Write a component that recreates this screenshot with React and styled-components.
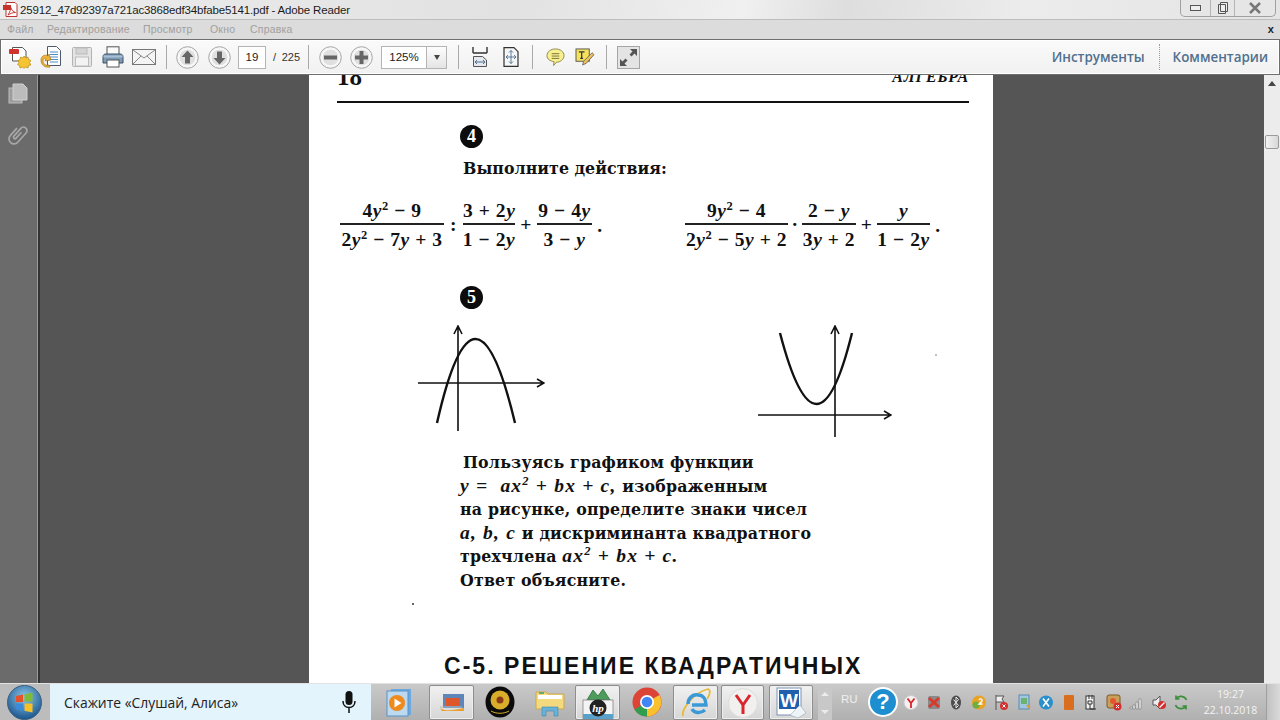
import React from "react";
import styled, { createGlobalStyle } from "styled-components";

const Global = createGlobalStyle`
  html, body { margin: 0; padding: 0; width: 1280px; height: 720px; overflow: hidden; background: #555; }
  * { box-sizing: border-box; }
`;

const Shell = styled.div`
  width: 1280px;
  height: 720px;
  display: flex;
  flex-direction: column;
  font-family: "Liberation Sans", Arial, sans-serif;
  overflow: hidden;
`;

/* window chrome */
const TitleBar = styled.div`
  height: 20px;
  flex: none;
  display: flex;
  align-items: flex-start;
  padding: 2px 4px 0 3px;
  background: linear-gradient(100deg, #ececec 0%, #e2e2e2 40%, #f0f0f0 58%, #dedede 66%, #ececec 80%, #e4e4e4 100%);
  border-bottom: 1px solid #bdbdbd;
`;
const TitleText = styled.span`
  margin-left: 2px;
  font-size: 11.5px;
  line-height: 16px;
  color: #1c1c1c;
  letter-spacing: -0.16px;
`;
const WinButtons = styled.div`
  margin: -2px 0 0 auto;
  width: 96px;
  height: 17px;
  display: flex;
  border: 1px solid #a0a0a0;
  border-top: 0;
  border-radius: 0 0 5px 5px;
  background: #e6e6e6;
`;
const WinBtn = styled.div`
  width: ${p => p.$w}px;
  display: flex;
  align-items: center;
  justify-content: center;
  border-right: ${p => (p.$last ? "0" : "1px solid #b5b5b5")};
`;
const MenuBar = styled.div`
  height: 19px;
  flex: none;
  display: flex;
  align-items: center;
  padding: 0 6px 1px 7px;
  background: #dcdcdc;
  font-size: 10.5px;
  color: #a0a0a0;
  letter-spacing: 0.2px;
`;
const MenuItem = styled.span`
  width: ${p => p.$w}px;
`;
const MenuClose = styled.span`
  margin-left: auto;
  font-size: 11px;
  font-weight: 700;
  color: #222;
`;
const Toolbar = styled.div`
  height: 36px;
  flex: none;
  display: flex;
  align-items: center;
  padding-left: 3px;
  padding-right: 11px;
  background: linear-gradient(#fafafa, #f1f1f1);
  border: 1px solid #6e6e6e;
  box-shadow: inset 0 0 0 1px #fff;
`;
const Tool = styled.div`
  width: ${p => p.$w || 30}px;
  margin-left: ${p => p.$ml || 0}px;
  height: 30px;
  flex: none;
  display: flex;
  align-items: center;
  justify-content: center;
`;
const Sep = styled.div`
  width: 1px;
  height: 24px;
  flex: none;
  margin: 0 6px 0 ${p => p.$ml || 6}px;
  background: #a9a9a9;
`;
const PageInput = styled.div`
  width: 28px;
  height: 23px;
  margin-left: 5px;
  flex: none;
  display: flex;
  align-items: center;
  justify-content: center;
  background: #fff;
  border: 1px solid #b4b4b4;
  font-size: 11.5px;
  color: #222;
`;
const PageCount = styled.div`
  width: 27px;
  display: flex;
  justify-content: space-between;
  flex: none;
  margin-left: 7px;
  font-size: 11px;
  color: #333;
`;
const ZoomBox = styled.div`
  width: 66px;
  height: 23px;
  margin-left: 5px;
  flex: none;
  display: flex;
  background: #fff;
  border: 1px solid #b4b4b4;
  font-size: 11.5px;
  color: #222;
`;
const ZoomValue = styled.div`
  flex: 1;
  display: flex;
  align-items: center;
  justify-content: center;
`;
const ZoomArrow = styled.div`
  width: 20px;
  display: flex;
  align-items: center;
  justify-content: center;
  border-left: 1px solid #b4b4b4;
  background: linear-gradient(#fdfdfd, #e4e4e4);
  &::after {
    content: "";
    border: 3.5px solid transparent;
    border-top: 5px solid #444;
    border-bottom: 0;
  }
`;
const PaneLinks = styled.div`
  margin-left: auto;
  display: flex;
  align-items: center;
  font-family: "Open Sans", "Liberation Sans", sans-serif;
  font-size: 13.4px;
  font-weight: 600;
  color: #50708f;
`;
const PaneLink = styled.span`
  padding-left: ${p => (p.$first ? 0 : 13)}px;
  padding-right: ${p => (p.$first ? 14 : 0)}px;
  line-height: 26px;
  border-right: ${p => (p.$first ? "1px dotted #9a9a9a" : "0")};
`;

/* viewer */
const Viewer = styled.div`
  height: 608px;
  flex: none;
  display: flex;
  overflow: hidden;
  background: #555;
`;
const SidePanel = styled.div`
  width: 38px;
  flex: none;
  display: flex;
  flex-direction: column;
  align-items: center;
  gap: 19px;
  padding-top: 8px;
  padding-right: 1px;
  background: #6b6b6b;
  border-right: 1px solid #9a9a9a;
`;
const SideEdge = styled.div`
  width: 2px;
  flex: none;
  background: #333;
`;
const Stage = styled.div`
  flex: 1;
  display: flex;
  margin-left: 269px;
`;
const Page = styled.div`
  position: relative;
  width: 684px;
  height: 700px;
  flex: none;
  padding: 0 24px 0 28px;
  background: #fff;
  color: #111;
  font-family: "Liberation Serif", "Times New Roman", serif;
`;
const PageHead = styled.div`
  height: 28px;
  display: flex;
  justify-content: space-between;
  align-items: flex-end;
  border-bottom: 2px solid #111;
`;
const PageNum = styled.div`
  margin-bottom: 13px;
  font-size: 25px;
  line-height: 22px;
  font-weight: 700;
`;
const PageRunner = styled.div`
  margin-bottom: 16px;
  font-size: 16px;
  line-height: 16px;
  font-weight: 700;
  font-style: italic;
  letter-spacing: 0.8px;
`;
const Badge = styled.div`
  width: 23px;
  height: 23px;
  margin: ${p => p.$mt}px 0 0 123px;
  display: flex;
  align-items: center;
  justify-content: center;
  border-radius: 50%;
  background: #0c0c0c;
  color: #fff;
  font-size: 18px;
  font-weight: 700;
`;
const TaskTitle = styled.div`
  margin: 10px 0 0 126px;
  font-family: "DejaVu Serif", serif;
  font-size: 15.8px;
  line-height: 22px;
  font-weight: 700;
  letter-spacing: 0.05px;
`;
const Formulas = styled.div`
  margin-top: 17px;
  display: flex;
  padding-left: 3px;
`;
const Formula = styled.div`
  width: ${p => p.$w}px;
  flex: none;
  display: flex;
  align-items: center;
  font-size: 19.5px;
  font-weight: 700;
  letter-spacing: 0.55px;
`;
const Frac = styled.div`
  width: ${p => p.$w}px;
  flex: none;
  display: flex;
  flex-direction: column;
  align-items: center;
  text-align: center;
  white-space: nowrap;
`;
const Num = styled.div`
  width: 100%;
  height: 28px;
  padding-top: 4px;
  line-height: 20px;
  border-bottom: 2px solid #222;
`;
const Den = styled.div`
  height: 28px;
  padding-top: 4px;
  line-height: 21px;
`;
const Op = styled.span`
  width: ${p => p.$w}px;
  flex: none;
  text-align: center;
  margin-top: ${p => p.$mt || 0}px;
`;
const Sup = styled.sup`
  font-size: 12.5px;
  line-height: 0;
  vertical-align: 7px;
`;
const Graphs = styled.div`
  display: flex;
  height: 117px;
  margin-top: 16px;
`;
const Graph = styled.div`
  margin-left: ${p => p.$ml}px;
  flex: none;
`;
const Problem = styled.div`
  margin: 9px 0 0 123px;
  font-family: "DejaVu Serif", serif;
  font-size: 15.8px;
  font-weight: 700;
  letter-spacing: 0.2px;
  white-space: nowrap;
`;
const ProblemLine = styled.div`
  height: 23.6px;
  line-height: 23.6px;
  padding-left: ${p => p.$indent || 0}px;
`;
const MathText = styled.i`
  font-family: "Liberation Serif", serif;
  font-size: 19.5px;
  line-height: 0;
  letter-spacing: 1.2px;
`;
const Speck = styled.span`
  position: absolute;
  left: ${p => p.$x}px;
  top: ${p => p.$y}px;
  width: 2px;
  height: 2px;
  border-radius: 50%;
  background: ${p => p.$c};
`;
const SectionHead = styled.div`
  margin: 60px 0 0 107px;
  font-family: "Liberation Sans", Arial, sans-serif;
  font-size: 23px;
  line-height: 26px;
  font-weight: 700;
  letter-spacing: 2.05px;
  white-space: nowrap;
`;
const ScrollBar = styled.div`
  width: 16px;
  flex: none;
  margin-left: 271px;
  display: flex;
  flex-direction: column;
  align-items: center;
  padding-top: 6px;
  background: #ececec;
`;
const ScrollUp = styled.div`
  border: 4px solid transparent;
  border-bottom: 5px solid #444;
  border-top: 0;
`;
const ScrollThumb = styled.div`
  width: 14px;
  height: 14px;
  margin-top: 49px;
  border: 1px solid #9a9a9a;
  border-radius: 2px;
  background: linear-gradient(90deg, #f2f2f2, #d8d8d8);
`;

/* taskbar */
const Taskbar = styled.div`
  height: 37px;
  flex: none;
  display: flex;
  align-items: stretch;
  background: linear-gradient(#c9c9c9, #b0b0b0);
  border-top: 1px solid #e2e2e2;
`;
const StartSlot = styled.div`
  width: 50px;
  flex: none;
  display: flex;
  align-items: center;
  padding-left: 7px;
  background: #bcbcbc;
`;
const SearchBox = styled.div`
  width: 321px;
  flex: none;
  display: flex;
  align-items: center;
  justify-content: space-between;
  padding: 0 14px;
  background: #e3f4fc;
  font-family: "Open Sans", "Liberation Sans", sans-serif;
  font-size: 13.9px;
  color: #222;
`;
const TaskSlot = styled.div`
  width: ${p => p.$w}px;
  margin-left: ${p => p.$ml || 0}px;
  flex: none;
  display: flex;
  align-items: center;
  justify-content: center;
  ${p => p.$tile && `
    margin-top: 1px;
    border: 1px solid #8e8e8e;
    border-radius: 2px;
    box-shadow: inset 0 0 0 1px #eee;
    background: linear-gradient(#f1f1f1, #d6d6d6);
  `}
`;
const TaskScroll = styled.div`
  width: 14px;
  margin-left: 5px;
  flex: none;
  display: flex;
  flex-direction: column;
  align-items: center;
  justify-content: space-between;
  padding: 8px 0 6px;
  background: #c8c8c8;
`;
const ScrollTri = styled.span`
  border: 4px solid transparent;
  ${p => (p.$up ? "border-bottom: 4px solid #ececec; border-top: 0;" : "border-top: 4px solid #ececec; border-bottom: 0;")}
`;
const Lang = styled.span`
  width: 24px;
  margin-left: 9px;
  flex: none;
  align-self: center;
  font-size: 11.5px;
  color: #eee;
  margin-top: -6px;
`;
const TrayIcon = styled.div`
  width: 22.5px;
  flex: none;
  display: flex;
  align-items: center;
  justify-content: center;
`;
const HelpBtn = styled.div`
  width: 30px;
  height: 30px;
  margin-right: 2px;
  margin-left: 3px;
  flex: none;
  align-self: center;
  display: flex;
  align-items: center;
  justify-content: center;
  border-radius: 50%;
  border: 2.5px solid #fff;
  background: #1d8ed0;
  color: #fff;
  font-size: 22px;
  font-weight: 700;
`;
const Clock = styled.div`
  width: 70px;
  margin-left: 3px;
  flex: none;
  display: flex;
  flex-direction: column;
  align-items: center;
  justify-content: center;
  gap: 4px;
  font-family: "Open Sans", "Liberation Sans", sans-serif;
  font-size: 10.5px;
  line-height: 12px;
  color: #f4f4f4;
`;
const ShowDesktop = styled.div`
  width: 14px;
  margin-left: auto;
  flex: none;
  background: linear-gradient(90deg, #c2c2c2, #dadada);
  border-left: 1px solid #9f9f9f;
`;

/* icons */
const PdfIcon = () => (
  <svg width="15" height="15" viewBox="0 0 15 15">
    <path d="M3 .5h9l2 2v12H3z" fill="#fff" stroke="#b33" />
    <rect x="0" y="3" width="8" height="5" fill="#c7332b" />
    <path d="M5 13c2-3 3-6 2.500-8 1 3 3 5 5 5.500-3 0-5 1-7.500 2.500z" fill="none" stroke="#c7332b" />
  </svg>
);
const CreateIcon = () => (
  <svg width="22" height="24" viewBox="0 0 22 24">
    <path d="M3.500 2.500h10l3.500 3.500v10H3.500z" fill="#fff" stroke="#555" />
    <rect x="0" y="4" width="10" height="5" rx="1" fill="#d3322c" />
    <path d="M15 11l1.500 2 2.500-1 .5 2.500 2.500 1-1.500 2 1.500 2.500-2.500.5-.5 2.500-2.500-1-1.500 1.500-1.500-1.500-2.500 1-.5-2.500-2-1 1.500-2-1-2 2-1 .5-2.500 2.500 1z" fill="#f4c433" stroke="#b8891a" strokeWidth=".7" />
  </svg>
);
const OpenIcon = () => (
  <svg width="22" height="24" viewBox="0 0 22 24">
    <path d="M7.500 1.500h9l4 4v15h-13z" fill="#fff" stroke="#4c5a6c" />
    <path d="M10 7h8M10 9.500h8M10 12h8M10 14.500h8M10 17h8" stroke="#4d8cc4" />
    <path d="M1 15c0-4 4-6 7-4l1-2 2 6-6 1 1-2c-2-1-3 0-3 2 0 3 3 5 6 4l1 2c-5 1-9-2-9-7z" fill="#efb33a" stroke="#a67518" strokeWidth=".7" />
  </svg>
);
const SaveIcon = () => (
  <svg width="20" height="20" viewBox="0 0 20 20">
    <rect x=".5" y=".5" width="19" height="19" rx="1" fill="#e4e4e4" stroke="#b3b3b3" />
    <rect x="4" y="1" width="11" height="6" fill="#d4d4d4" stroke="#bbb" />
    <rect x="3.500" y="10" width="13" height="9" fill="#f3f3f3" stroke="#bbb" />
  </svg>
);
const PrintIcon = () => (
  <svg width="22" height="22" viewBox="0 0 22 22">
    <rect x="5" y=".8" width="12" height="8" fill="#fafafa" stroke="#555" />
    <path d="M1 11c0-2 1-3 3-3h14c2 0 3 1 3 3v6H1z" fill="#7d9ab8" stroke="#3f5163" />
    <rect x="1.500" y="9.500" width="19" height="2" fill="#a9c0d6" />
    <rect x="5" y="14" width="12" height="7" fill="#fff" stroke="#555" />
  </svg>
);
const MailIcon = () => (
  <svg width="24" height="16" viewBox="0 0 24 16">
    <rect x=".5" y=".5" width="23" height="15" fill="#f4f4f4" stroke="#777" />
    <path d="M1 1l11 8 11-8M1 15l8-8M23 15l-8-8" fill="none" stroke="#888" />
  </svg>
);
const CircleBtn = ({ kind }) => (
  <svg width="23" height="23" viewBox="0 0 23 23">
    <circle cx="11.500" cy="11.500" r="10.800" fill="#f4f4f4" stroke="#a6a6a6" />
    <circle cx="11.500" cy="11.500" r="8.500" fill="#e0e0e0" stroke="#fff" />
    <path
      fill="#666"
      d={{
        up: "M11.500 4.500l6 6.500h-3.500v6.500h-5v-6.500h-3.500z",
        down: "M11.500 18.500l6-6.500h-3.500v-6.500h-5v6.500h-3.500z",
        minus: "M5 9.500h13v4h-13z",
        plus: "M9.500 5h4v4.500h4.500v4h-4.500v4.500h-4v-4.500h-4.500v-4h4.500z",
      }[kind]}
    />
  </svg>
);
const FitWidthIcon = () => (
  <svg width="16" height="20" viewBox="0 0 16 20">
    <path d="M1 0v6M15 0v6M1 6h14" fill="none" stroke="#333" strokeWidth="1.400" />
    <path d="M1.500 9.500h9l4 3.500v6.500h-13z" fill="#e6e9ee" stroke="#555" />
    <path d="M3 15h10M3 15l2-2M3 15l2 2M13 15l-2-2M13 15l-2 2" fill="none" stroke="#4f6f90" />
  </svg>
);
const FitPageIcon = () => (
  <svg width="16" height="20" viewBox="0 0 16 20">
    <path d="M1 .7h10l4 4v14.600h-14z" fill="#f4f6f8" stroke="#333" strokeWidth="1.200" />
    <path d="M8 3.500v13M8 3.500l-2 2M8 3.500l2 2M8 16.500l-2-2M8 16.500l2-2M3 10h10M3 10l2-2M3 10l2 2M13 10l-2-2M13 10l-2 2" fill="none" stroke="#4f6f90" strokeWidth=".9" />
  </svg>
);
const CommentIcon = () => (
  <svg width="19" height="18" viewBox="0 0 20 19">
    <path d="M10 1c5 0 9 3 9 7s-4 7-8 7l-3 3.500.5-4C4 13.500 1 12 1 8 1 4 5 1 10 1z" fill="#f8ef8f" stroke="#8d8648" />
    <path d="M6 6h8M6 8.500h8M6 11h8" stroke="#77723c" />
  </svg>
);
const SignIcon = () => (
  <svg width="20" height="18" viewBox="0 0 21 19">
    <rect x="1" y="1" width="14" height="13" fill="#f5e25c" stroke="#555" />
    <path d="M4 4h6M7 4v7M5.500 11h3" stroke="#333" strokeWidth="1.300" fill="none" />
    <path d="M18 5l2 2-8 9-4 2 1-4z" fill="#eec15c" stroke="#555" strokeWidth=".8" />
  </svg>
);
const ExpandIcon = () => (
  <svg width="23" height="23" viewBox="0 0 23 23">
    <rect x=".5" y=".5" width="22" height="22" fill="#e4e4e4" stroke="#a5a5a5" />
    <path d="M20 3v7l-2.500-2.500-3 3-2-2 3-3L13 3zM3 20v-7l2.500 2.500 3-3 2 2-3 3L10 20z" fill="#555" />
  </svg>
);
const PagesIcon = () => (
  <svg width="20" height="21" viewBox="0 0 20 21">
    <rect x="1" y="5" width="13" height="15" fill="#9c9c9c" stroke="#bdbdbd" />
    <path d="M5 1h10l4 4v12h-14z" fill="#bcbcbc" stroke="#d0d0d0" />
  </svg>
);
const ClipIcon = () => (
  <svg width="22" height="23" viewBox="0 0 22 23">
    <path d="M6 7v10a5 5 0 0 0 10 0V4.500a3.500 3.500 0 0 0-7 0V15a1.500 1.500 0 0 0 3 0V7" transform="rotate(42 11 11.500) translate(0 .5)" fill="none" stroke="#a7a7a7" strokeWidth="1.700" />
  </svg>
);
const StartOrb = () => (
  <svg width="35" height="35" viewBox="0 0 35 35">
    <defs>
      <radialGradient id="orb" cx=".5" cy=".35" r=".7">
        <stop offset="0" stopColor="#8fc8ea" />
        <stop offset="1" stopColor="#0f4c86" />
      </radialGradient>
    </defs>
    <circle cx="17.500" cy="17.500" r="17" fill="url(#orb)" stroke="#3c5f80" />
    <path d="M9 11l7-1.500v7.500h-7z" fill="#e5522a" />
    <path d="M17.500 9.200l8-1.700v9h-8z" fill="#7fbb35" />
    <path d="M9 18.500h7v7.500l-7-1.500z" fill="#3b8bd8" />
    <path d="M17.500 18.500h8v9l-8-1.700z" fill="#f5c126" />
  </svg>
);
const MicIcon = () => (
  <svg width="16" height="24" viewBox="0 0 16 24">
    <rect x="4.500" y="1" width="7" height="14" rx="3.500" fill="#111" />
    <path d="M2 11c0 4 2.500 6.500 6 6.500s6-2.500 6-6.500M8 17.500V23" fill="none" stroke="#111" strokeWidth="1.500" />
  </svg>
);
const MediaIcon = () => (
  <svg width="28" height="30" viewBox="0 0 28 30">
    <rect x="5" y="2" width="20" height="26" fill="#6da9de" />
    <rect x="1" y="4" width="21" height="25" fill="#bcd9f0" stroke="#5b93c7" />
    <circle cx="11" cy="16" r="8" fill="#ef8a1d" />
    <path d="M8.500 11.500l7 4.500-7 4.500z" fill="#fff" />
  </svg>
);
const FlashIcon = () => (
  <svg width="28" height="20" viewBox="0 0 28 20">
    <rect x="5" y="1" width="21" height="14" fill="#5f86b8" />
    <path d="M8 5h14v8H8z" fill="#e0562b" />
    <path d="M2 15c6 4 14 2 24 0v3H4z" fill="#e9a02e" />
    <path d="M2 14h22" stroke="#bbb" />
  </svg>
);
const CamIcon = () => (
  <svg width="30" height="32" viewBox="0 0 30 32">
    <ellipse cx="15" cy="16" rx="14.500" ry="15.500" fill="#0b0b0b" />
    <circle cx="15" cy="14" r="9.500" fill="#d8ad2a" />
    <circle cx="15" cy="14" r="3.500" fill="#8a3a18" />
    <path d="M6 25c5 3 13 3 18 0" stroke="#d8ad2a" fill="none" />
  </svg>
);
const FolderIcon = () => (
  <svg width="30" height="30" viewBox="0 0 30 30">
    <path d="M1 5h10l2 2h16v15H1z" fill="#f4d97e" stroke="#c9a94f" />
    <rect x="3" y="8" width="24" height="4" fill="#fff" />
    <rect x="4" y="5" width="5" height="2" fill="#6aa86b" />
    <path d="M7 20h16v9h-4v-5h-8v5H7z" fill="#68b1d8" stroke="#3d86ad" strokeWidth=".6" />
  </svg>
);
const HpIcon = () => (
  <svg width="38" height="34" viewBox="0 0 38 34">
    <path d="M8 14l6-10 5 6 5-7 7 11z" fill="#4d9c5b" stroke="#2e6c3c" strokeWidth=".8" />
    <rect x="4" y="14" width="30" height="19" fill="#f4f4f4" stroke="#777" strokeWidth=".7" />
    <rect x="4" y="28" width="30" height="5" fill="#5aa1c9" />
    <circle cx="19" cy="22" r="8.500" fill="#222" />
    <text x="19" y="26" textAnchor="middle" fontFamily="Liberation Serif" fontStyle="italic" fontWeight="700" fontSize="11" fill="#fff">hp</text>
  </svg>
);
const ChromeIcon = () => (
  <svg width="30" height="30" viewBox="0 0 30 30">
    <circle cx="15" cy="15" r="14.500" fill="#db4437" />
    <path d="M15 15L2.500 22.500A14.500 14.500 0 0 0 15 29.500z" fill="#2f9e4f" />
    <path d="M15 15L27.500 8A14.500 14.500 0 0 1 15 29.500z" fill="#fbc02d" />
    <circle cx="15" cy="15" r="7" fill="#fff" />
    <circle cx="15" cy="15" r="5.300" fill="#4285f4" />
  </svg>
);
const IeIcon = () => (
  <svg width="32" height="32" viewBox="0 0 32 32">
    <path d="M3 29C1 24 12 6 28 2c3 1 2 6-1 10" fill="none" stroke="#e7b93a" strokeWidth="1.800" />
    <path d="M8 17c0-6 5-10 10-9 5 0 8 4 8 10H12m0 4c2 4 8 5 13 1" fill="none" stroke="#3b9ad6" strokeWidth="3.500" />
  </svg>
);
const YandexIcon = () => (
  <svg width="30" height="30" viewBox="0 0 30 30">
    <circle cx="15" cy="15" r="14.500" fill="#f2f0ef" stroke="#dcdcdc" />
    <path d="M8 7l7 10 7-10M15 17v9" fill="none" stroke="#d9262c" strokeWidth="3" />
  </svg>
);
const WordIcon = () => (
  <svg width="34" height="32" viewBox="0 0 34 32">
    <rect x="3" y="1" width="24" height="27" fill="#fff" stroke="#7a93b5" />
    <rect x="5" y="3" width="20" height="19" fill="#1f5fae" />
    <text x="15" y="20" textAnchor="middle" fontFamily="Liberation Sans" fontWeight="700" fontSize="19" fill="#fff">W</text>
    <path d="M26 18l6 8-8 5-8-3z" fill="#eef3f8" stroke="#9ab" strokeWidth=".6" />
  </svg>
);
const Tray = ({ c, c2, shape }) => (
  <svg width="16" height="17" viewBox="0 0 16 17">
    {shape === "y" && (
      <>
        <circle cx="8" cy="8.500" r="7" fill="#f4f1f0" stroke="#ccc" />
        <path d="M4.500 4.500L8 9l3.500-4.500M8 9v5" fill="none" stroke="#d9262c" strokeWidth="1.800" />
      </>
    )}
    {shape === "x" && (
      <>
        <rect x="2" y="2" width="12" height="13" rx="2" fill="#8a8a8a" />
        <path d="M3 4l10 9M13 4L3 13" stroke={c} strokeWidth="3" />
      </>
    )}
    {shape === "bt" && (
      <>
        <ellipse cx="8" cy="8.500" rx="5" ry="7" fill="#4c4c4c" />
        <path d="M5.500 5.500l5 6-2.500 2.500v-11l2.500 2.500-5 6" fill="none" stroke="#eee" />
      </>
    )}
    {shape === "badge" && (
      <>
        <circle cx="8" cy="8.500" r="7" fill="#e8a326" />
        <circle cx="5" cy="11" r="3.500" fill="#6fae3a" />
        <path d="M8 6c1-2 4-1 3 1l-3 3h3.500" fill="none" stroke="#fff" strokeWidth="1.300" />
      </>
    )}
    {shape === "flag" && (
      <>
        <path d="M3 1v15M3 2h8l-2 3 2 3H3" fill="#eee" stroke="#555" />
        <circle cx="11" cy="12" r="4" fill="#d32f2f" />
        <path d="M9.500 10.500l3 3M12.500 10.500l-3 3" stroke="#fff" />
      </>
    )}
    {shape === "net" && (
      <>
        <rect x="3" y="1" width="10" height="14" fill="#9fc7e0" stroke="#5a8bb0" />
        <rect x="5" y="4" width="6" height="6" fill="#6bb36e" />
        <path d="M11 11l3 3" stroke="#e19a2b" strokeWidth="2" />
      </>
    )}
    {shape === "book" && <rect x="3" y="1" width="10" height="15" rx="1" fill={c} />}
    {shape === "plug" && (
      <>
        <rect x="3" y="2" width="8" height="13" fill="#f2f2f2" stroke="#333" />
        <path d="M6 1v4M9 1v4M5 7h4v3H5zM7 10v5h6" fill="none" stroke="#333" />
      </>
    )}
    {shape === "avast" && (
      <>
        <rect x="1" y="1" width="13" height="13" rx="2" fill="#c9a05a" stroke="#7a5a25" />
        <circle cx="7" cy="7" r="3" fill="#e4572e" />
        <circle cx="11.500" cy="12.500" r="4" fill="#d32f2f" />
        <path d="M10 11l3 3M13 11l-3 3" stroke="#fff" />
      </>
    )}
    {shape === "signal" && (
      <path d="M2 13h2v2H2zM5 11h2v4H5zM8 8h2v7H8zM11 5h2v10h-2z" fill="#f2f2f2" stroke="#666" strokeWidth=".5" />
    )}
    {shape === "sound" && (
      <>
        <path d="M2 6h3l4-4v13l-4-4H2z" fill="#eee" stroke="#555" />
        <circle cx="11" cy="11" r="4" fill="#d32f2f" />
        <path d="M8.500 13.500l5-5" stroke="#fff" strokeWidth="1.300" />
      </>
    )}
    {shape === "sync" && (
      <path d="M13.500 6A6 6 0 0 0 3 5M2.500 11A6 6 0 0 0 13 12M3 1.500V5h3.500M13 15.500V12H9.500" fill="none" stroke={c2} strokeWidth="1.700" />
    )}
    {shape === "xhelp" && (
      <>
        <circle cx="8" cy="8.500" r="7" fill="#2a8fcb" />
        <path d="M5 4.500l6 8M11 4.500l-6 8" stroke="#fff" strokeWidth="1.600" />
      </>
    )}
  </svg>
);

const Axes = ({ w, h, hx0, hy, vx, children }) => (
  <svg width={w} height={h} viewBox={`0 0 ${w} ${h}`} fill="none" stroke="#111">
    <path d={`M${hx0} ${hy}H${w - 2}M${w - 8} ${hy - 4}L${w - 1} ${hy}L${w - 8} ${hy + 4}`} strokeWidth="1.600" />
    <path d={`M${vx} ${h}V2M${vx - 4} 9L${vx} 1L${vx + 4} 9`} strokeWidth="1.600" />
    {children}
  </svg>
);

const trayIcons = [
  { shape: "y" },
  { shape: "x", c: "#d83a2e" },
  { shape: "bt" },
  { shape: "badge" },
  { shape: "flag" },
  { shape: "net" },
  { shape: "xhelp" },
  { shape: "book", c: "#d96f1e" },
  { shape: "plug" },
  { shape: "avast" },
  { shape: "signal" },
  { shape: "sound" },
  { shape: "sync", c2: "#3d8f3d" },
];

const Y = () => <i>y</i>;

export default function App() {
  return (
    <Shell>
      <Global />
      <TitleBar>
        <PdfIcon />
        <TitleText>25912_47d92397a721ac3868edf34bfabe5141.pdf - Adobe Reader</TitleText>
        <WinButtons>
          <WinBtn $w={30}>
            <svg width="12" height="8"><rect x=".5" y="1.500" width="10" height="5" fill="#eee" stroke="#555" /></svg>
          </WinBtn>
          <WinBtn $w={24}>
            <svg width="12" height="14"><path d="M3.500 1.500h7v9h-7zM1.500 3.500h7v9h-7z" fill="#eee" stroke="#555" /></svg>
          </WinBtn>
          <WinBtn $w={40} $last>
            <svg width="12" height="12"><path d="M1 1l10 10M11 1L1 11" stroke="#777" strokeWidth="2.500" /></svg>
          </WinBtn>
        </WinButtons>
      </TitleBar>
      <MenuBar>
        <MenuItem $w={40}>Файл</MenuItem>
        <MenuItem $w={96}>Редактирование</MenuItem>
        <MenuItem $w={67}>Просмотр</MenuItem>
        <MenuItem $w={40}>Окно</MenuItem>
        <MenuItem $w={60}>Справка</MenuItem>
        <MenuClose>x</MenuClose>
      </MenuBar>
      <Toolbar>
        <Tool $w={31}><CreateIcon /></Tool>
        <Tool $w={31}><OpenIcon /></Tool>
        <Tool $w={31}><SaveIcon /></Tool>
        <Tool $w={31}><PrintIcon /></Tool>
        <Tool $w={31}><MailIcon /></Tool>
        <Sep $ml={7} />
        <Tool $w={28}><CircleBtn kind="up" /></Tool>
        <Tool $w={28} $ml={4}><CircleBtn kind="down" /></Tool>
        <PageInput>19</PageInput>
        <PageCount><span>/</span><span>225</span></PageCount>
        <Sep $ml={8} />
        <Tool><CircleBtn kind="minus" /></Tool>
        <Tool $ml={1}><CircleBtn kind="plus" /></Tool>
        <ZoomBox><ZoomValue>125%</ZoomValue><ZoomArrow /></ZoomBox>
        <Sep $ml={11} />
        <Tool><FitWidthIcon /></Tool>
        <Tool $ml={1}><FitPageIcon /></Tool>
        <Sep />
        <Tool $ml={1}><CommentIcon /></Tool>
        <Tool><SignIcon /></Tool>
        <Sep />
        <Tool $w={23} $ml={4}><ExpandIcon /></Tool>
        <PaneLinks>
          <PaneLink $first>Инструменты</PaneLink>
          <PaneLink>Комментарии</PaneLink>
        </PaneLinks>
      </Toolbar>
      <Viewer>
        <SidePanel>
          <PagesIcon />
          <ClipIcon />
        </SidePanel>
        <SideEdge />
        <Stage>
          <Page>
            <PageHead>
              <PageNum>18</PageNum>
              <PageRunner>АЛГЕБРА</PageRunner>
            </PageHead>
            <Badge $mt={22}>4</Badge>
            <TaskTitle>Выполните действия:</TaskTitle>
            <Formulas>
              <Formula $w={345}>
                <Frac $w={104}>
                  <Num>4<Y /><Sup>2</Sup> − 9</Num>
                  <Den>2<Y /><Sup>2</Sup> − 7<Y /> + 3</Den>
                </Frac>
                <Op $w={19}>:</Op>
                <Frac $w={52}>
                  <Num>3 + 2<Y /></Num>
                  <Den>1 − 2<Y /></Den>
                </Frac>
                <Op $w={22}>+</Op>
                <Frac $w={55}>
                  <Num>9 − 4<Y /></Num>
                  <Den>3 − <Y /></Den>
                </Frac>
                <Op $w={16} $mt={2}>.</Op>
              </Formula>
              <Formula $w={280}>
                <Frac $w={103}>
                  <Num>9<Y /><Sup>2</Sup> − 4</Num>
                  <Den>2<Y /><Sup>2</Sup> − 5<Y /> + 2</Den>
                </Frac>
                <Op $w={14}>·</Op>
                <Frac $w={54}>
                  <Num>2 − <Y /></Num>
                  <Den>3<Y /> + 2</Den>
                </Frac>
                <Op $w={21}>+</Op>
                <Frac $w={53}>
                  <Num><Y /></Num>
                  <Den>1 − 2<Y /></Den>
                </Frac>
                <Op $w={16} $mt={2}>.</Op>
              </Formula>
            </Formulas>
            <Badge $mt={33}>5</Badge>
            <Graphs>
              <Graph $ml={80}>
                <Axes w={128} h={106} hx0={1} hy={58} vx={41}>
                  <path d="M20 98Q58 -70 98 98" strokeWidth="2.400" />
                </Axes>
              </Graph>
              <Graph $ml={211}>
                <Axes w={136} h={112} hx0={2} hy={90} vx={79}>
                  <path d="M24 8Q61 150 96 8" strokeWidth="2.400" />
                </Axes>
              </Graph>
            </Graphs>
            <Problem>
              <ProblemLine $indent={3}>Пользуясь графиком функции</ProblemLine>
              <ProblemLine><MathText>y =&nbsp; ax<Sup>2</Sup> + bx + c,</MathText> изображенным</ProblemLine>
              <ProblemLine>на рисунке, определите знаки чисел</ProblemLine>
              <ProblemLine><MathText>a, b, c</MathText> и дискриминанта квадратного</ProblemLine>
              <ProblemLine>трехчлена <MathText>ax<Sup>2</Sup> + bx + c.</MathText></ProblemLine>
              <ProblemLine>Ответ объясните.</ProblemLine>
            </Problem>
            <Speck $x={103} $y={528} $c="#333" />
            <Speck $x={626} $y={279} $c="#aaa" />
            <SectionHead>С-5. РЕШЕНИЕ КВАДРАТИЧНЫХ</SectionHead>
          </Page>
          <ScrollBar>
            <ScrollUp />
            <ScrollThumb />
          </ScrollBar>
        </Stage>
      </Viewer>
      <Taskbar>
        <StartSlot><StartOrb /></StartSlot>
        <SearchBox>Скажите «Слушай, Алиса»<MicIcon /></SearchBox>
        <TaskSlot $w={58}><MediaIcon /></TaskSlot>
        <TaskSlot $w={45} $tile><FlashIcon /></TaskSlot>
        <TaskSlot $w={51}><CamIcon /></TaskSlot>
        <TaskSlot $w={50}><FolderIcon /></TaskSlot>
        <TaskSlot $w={45} $tile><HpIcon /></TaskSlot>
        <TaskSlot $w={53}><ChromeIcon /></TaskSlot>
        <TaskSlot $w={45} $tile><IeIcon /></TaskSlot>
        <TaskSlot $w={43} $ml={3} $tile><YandexIcon /></TaskSlot>
        <TaskSlot $w={44} $ml={5} $tile><WordIcon /></TaskSlot>
        <TaskScroll><ScrollTri $up /><ScrollTri /></TaskScroll>
        <Lang>RU</Lang>
        <HelpBtn>?</HelpBtn>
        {trayIcons.map((t, i) => (
          <TrayIcon key={i}><Tray {...t} /></TrayIcon>
        ))}
        <Clock><span>19:27</span><span>22.10.2018</span></Clock>
        <ShowDesktop />
      </Taskbar>
    </Shell>
  );
}
